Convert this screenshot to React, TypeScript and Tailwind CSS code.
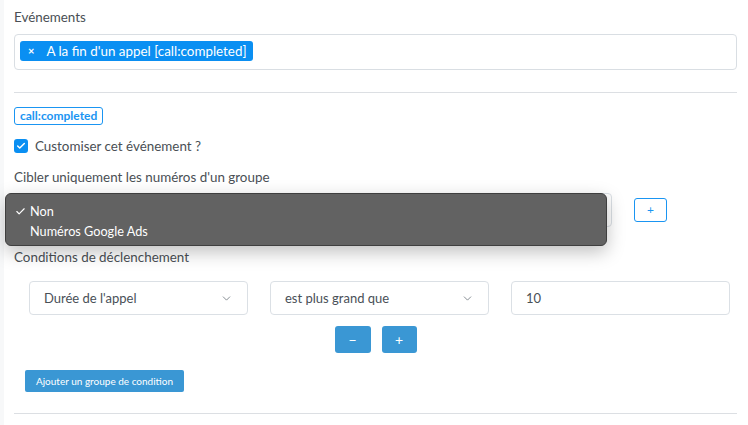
import { Check, ChevronDown } from 'lucide-react'

const font = { fontFamily: 'Lato, "Open Sans", sans-serif' }

function SelectBox({ label }: { label: string }) {
  return (
    <div className="flex h-[34px] w-[219px] items-center justify-between rounded border border-[#dbe0e5] bg-white px-[14px] text-[13px] text-[#495057]">
      <span>{label}</span>
      <ChevronDown size={13} strokeWidth={1.5} className="text-[#6c757d]" />
    </div>
  )
}

export default function App() {
  return (
    <div className="flex h-[425px] w-[748px] overflow-hidden bg-white" style={font}>
      <div className="w-[4px] bg-[#f7f8f9]" />
      <div className="flex-1 pl-[10px] pr-[11px] pt-[8px]">
        <div className="text-[13.4px] leading-[18px] text-[#4a4f55]">Evénements</div>

        <div className="mt-[8px] flex h-[36px] items-start rounded border border-[#d9dee3] px-[5px] pt-[6px]">
          <span className="flex h-[20px] items-center rounded-[3px] bg-[#0a8ff2] pl-[8px] pr-[6px] text-[13.4px] text-white">
            <span className="mr-[12px] text-[11px] font-bold">×</span>
            A la fin d'un appel [call:completed]
          </span>
        </div>

        <div className="mt-[22px] border-t border-[#dcdfe3]" />

        <div className="mt-[14px] inline-flex h-[18px] items-center rounded-[3px] border border-[#1a95f2] px-[5px] text-[12px] font-bold text-[#1a95f2]">
          call:completed
        </div>

        <div className="mt-[10px] flex items-center gap-[7px]">
          <span className="flex h-[14px] w-[14px] items-center justify-center rounded-[3px] bg-[#0a8ff2]">
            <Check size={10} strokeWidth={3.5} className="text-white" />
          </span>
          <span className="text-[13.4px] text-[#4a4f55]">Customiser cet événement ?</span>
        </div>

        <div className="mt-[11px] text-[13.4px] text-[#4a4f55]">Cibler uniquement les numéros d'un groupe</div>

        <div className="relative mt-[6px] flex h-[34px] items-center">
          <div className="ml-[-6px] h-[34px] w-[604px] rounded border border-[#dbe0e5] bg-white" />
          <button className="ml-[22px] flex h-[24px] w-[33px] items-center justify-center rounded-[3px] border border-[#1a95f2] text-[12px] text-[#1a95f2]">
            +
          </button>

          <div className="absolute left-[-9px] top-[0px] z-10 h-[53px] w-[602px] rounded-[6px] border border-[#3f3f3f] bg-[#626262] pt-[7px] text-[12.7px] text-white shadow-[0_6px_18px_rgba(0,0,0,0.25)]">
            <div className="flex h-[20px] items-center pl-[9px]">
              <Check size={11} strokeWidth={2.5} className="mr-[4px]" />
              Non
            </div>
            <div className="flex h-[20px] items-center pl-[24px]">Numéros Google Ads</div>
          </div>
        </div>

        <div className="mt-[20px] text-[13.4px] text-[#4a4f55]">Conditions de déclenchement</div>

        <div className="mt-[14px] flex gap-[22px] pl-[15px]">
          <SelectBox label="Durée de l'appel" />
          <SelectBox label="est plus grand que" />
          <div className="flex h-[34px] w-[219px] items-center rounded border border-[#dbe0e5] bg-white pl-[14px] text-[13px] text-[#495057]">
            10
          </div>
        </div>

        <div className="mt-[11px] flex justify-center gap-[11px]">
          <button className="flex h-[27px] w-[36px] items-center justify-center rounded-[3px] bg-[#3a97d4] text-[14px] text-white">−</button>
          <button className="flex h-[27px] w-[35px] items-center justify-center rounded-[3px] bg-[#3a97d4] text-[14px] text-white">+</button>
        </div>

        <button className="ml-[11px] mt-[17px] flex h-[22px] w-[159px] items-center justify-center rounded-[2px] bg-[#3a97d4] text-[10px] text-white">
          Ajouter un groupe de condition
        </button>

        <div className="mt-[21px] border-t border-[#dcdfe3]" />
      </div>
    </div>
  )
}
